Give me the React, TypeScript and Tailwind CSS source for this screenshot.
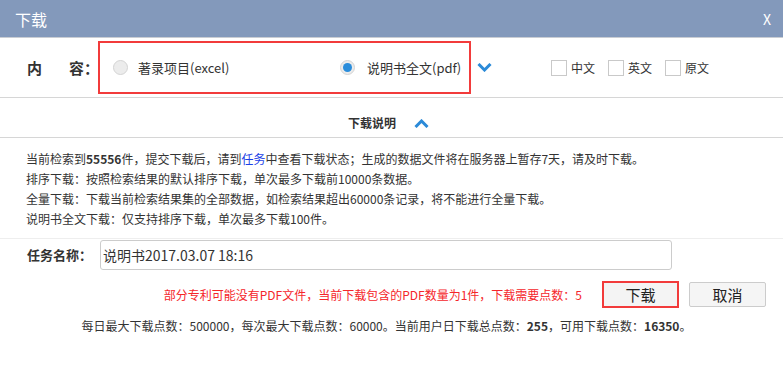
import React, { useState } from 'react'

const FONT = "font-['Noto_Sans_CJK_SC','Open_Sans',sans-serif] [text-autospace:no-autospace]"

const Chevron: React.FC<{ up?: boolean }> = ({ up }) => (
  <svg width="15" height="9" viewBox="0 0 15 9" className="block">
    <polyline
      points={up ? '1.5,8 7.5,2 13.5,8' : '1.5,1 7.5,7 13.5,1'}
      fill="none"
      stroke="#2b8ad8"
      strokeWidth="3"
    />
  </svg>
)

const Radio: React.FC<{ checked?: boolean }> = ({ checked }) => (
  <span className="w-[15px] h-[15px] rounded-full bg-[#ececec] border border-[#d4d4d4] flex items-center justify-center shrink-0">
    {checked && <span className="w-[9px] h-[9px] rounded-full bg-[#2b8ddb]" />}
  </span>
)

const Check: React.FC<{ label: string }> = ({ label }) => (
  <label className="flex items-center gap-[4px] mr-[13px]">
    <span className="w-[16px] h-[16px] border border-[#c9c9c9] bg-white" />
    <span className="text-[12px] leading-[16px]">{label}</span>
  </label>
)

export default function App() {
  const [format, setFormat] = useState<'excel' | 'pdf'>('pdf')
  const [taskName, setTaskName] = useState('说明书2017.03.07 18:16')

  return (
    <div className={`w-[783px] h-[371px] bg-white text-[#333] ${FONT}`}>
      {/* Header */}
      <div className="h-[38px] bg-[#8399bb] border-b border-[#c9cdd3] flex items-center justify-between pl-[15px] pr-[12px] text-white">
        <span className="text-[16px] leading-[20px]">下载</span>
        <span className="text-[14px] leading-[20px]">X</span>
      </div>

      {/* Content selection */}
      <div className="h-[60px] flex items-center border-b border-[#d6d6d6]">
        <div className="w-[98px] pl-[27px] flex text-[15px] font-bold leading-[20px]">
          <span>内</span>
          <span className="ml-[27px]">容：</span>
        </div>
        <div className="w-[373px] h-[53px] border-2 border-[#f23b3b] flex items-center pl-[13px] text-[13px]">
          <button onClick={() => setFormat('excel')} className="w-[227px] flex items-center gap-[10px]">
            <Radio checked={format === 'excel'} />
            <span className="leading-[16px]">著录项目(excel)</span>
          </button>
          <button onClick={() => setFormat('pdf')} className="flex items-center gap-[12px]">
            <Radio checked={format === 'pdf'} />
            <span className="leading-[16px]">说明书全文(pdf)</span>
          </button>
        </div>
        <div className="ml-[6px]">
          <Chevron />
        </div>
        <div className="ml-[59px] flex items-center">
          <Check label="中文" />
          <Check label="英文" />
          <Check label="原文" />
        </div>
      </div>

      {/* Instructions toggle */}
      <div className="h-[40px] pt-[11px] flex items-center justify-center gap-[18px] pr-[6px] border-b border-[#d6d6d6]">
        <span className="text-[12px] font-bold leading-[16px]">下载说明</span>
        <Chevron up />
      </div>

      {/* Instructions */}
      <div className="pt-[11px] pb-[9px] px-[26px] text-[12px] leading-[20px] border-b border-[#eeeeee]">
        <p>
          当前检索到<b>55556</b>件，提交下载后，请到<span className="text-[#1c3fe6]">任务</span>中查看下载状态；生成的数据文件将在服务器上暂存7天，请及时下载。
        </p>
        <p>排序下载：按照检索结果的默认排序下载，单次最多下载前10000条数据。</p>
        <p>全量下载：下载当前检索结果集的全部数据，如检索结果超出60000条记录，将不能进行全量下载。</p>
        <p>说明书全文下载：仅支持排序下载，单次最多下载100件。</p>
      </div>

      {/* Task name */}
      <div className="mt-[1px] flex items-center">
        <span className="w-[100px] pl-[27px] text-[13px] font-bold leading-[20px]">任务名称：</span>
        <input
          value={taskName}
          onChange={(e) => setTaskName(e.target.value)}
          className="w-[572px] h-[30px] border border-[#cccccc] rounded-[3px] pl-[2px] text-[14px] text-[#333] outline-none"
        />
      </div>

      {/* Actions */}
      <div className="mt-[11px] flex items-center justify-end pr-[17px]">
        <span className="text-[12px] leading-[20px] text-[#f5262b]">
          部分专利可能没有PDF文件，当前下载包含的PDF数量为1件，下载需要点数：5
        </span>
        <button className="ml-[20px] w-[77px] h-[27px] border-2 border-[#f23b3b] bg-[#f4f4f4] text-[15px] leading-[20px] text-[#222]">
          下载
        </button>
        <button className="ml-[10px] w-[77px] h-[25px] border border-[#cccccc] rounded-[2px] bg-[#f5f5f5] text-[15px] leading-[20px] text-[#222]">
          取消
        </button>
      </div>

      {/* Quota */}
      <p className="mt-[8px] pr-[10px] text-center text-[12px] leading-[20px]">
        每日最大下载点数：500000，每次最大下载点数：60000。当前用户日下载总点数：<b>255</b>，可用下载点数：<b>16350</b>。
      </p>
    </div>
  )
}
